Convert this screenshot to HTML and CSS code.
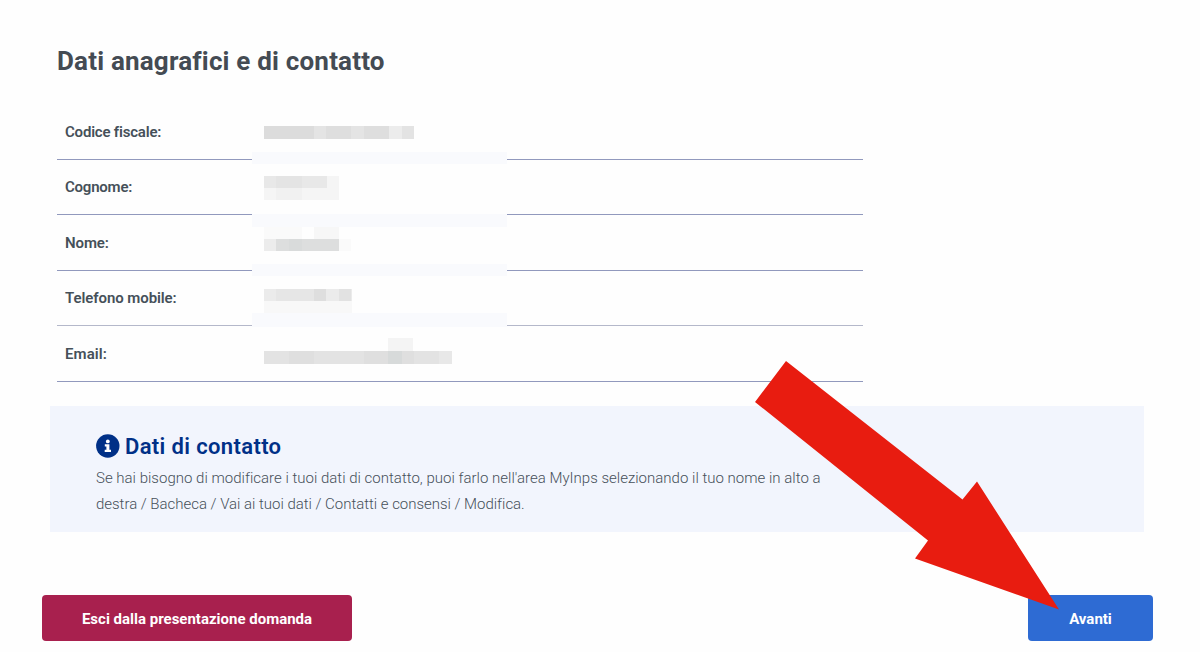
FILE: index.html
```html
<!DOCTYPE html>
<html lang="it">
<head>
<meta charset="utf-8">
<title>Dati anagrafici e di contatto</title>
<link rel="stylesheet" href="styles.css">
</head>
<body>
<main class="page">
  <h1 class="title">Dati anagrafici e di contatto</h1>

  <section class="details">
    <div class="row"><span class="label label-cf">Codice fiscale:</span></div>
    <div class="row row-short"><span class="label label-cognome">Cognome:</span></div>
    <div class="row"><span class="label label-nome">Nome:</span></div>
    <div class="row row-short row-soft"><span class="label label-tel">Telefono mobile:</span></div>
    <div class="row"><span class="label label-email">Email:</span></div>
    <!-- pixelated personal values -->
    <svg class="mosaic" width="255" height="278" viewBox="252 104 255 278" shape-rendering="crispEdges" aria-hidden="true">
      <g fill="#f9fafd">
        <path d="M252 152h255v12H252zM252 214h255v13H252zM252 264h255v12H252zM252 313h255v14H252z"/>
      </g>
      <path fill="#dcdcdc" d="M264 126h50v13h-50z"/>
      <path fill="#e4e4e4" d="M314 126h50v13h-50z"/>
      <path fill="#dedede" d="M326 126h25v13h-25zM364 126h25v13h-25z"/>
      <path fill="#ececec" d="M389 126h25v13h-25z"/>
      <path fill="#e3e3e3" d="M402 126h12v13h-12z"/>
      <path fill="#e8e8e8" d="M264 176h63v12h-63z"/>
      <path fill="#e4e4e4" d="M276 176h26v12h-26z"/>
      <path fill="#f5f5f5" d="M264 188h75v12h-75zM327 176h12v12h-12z"/>
      <path fill="#f1f1f1" d="M276 188h26v12h-26z"/>
      <path fill="#fafafa" d="M264 227h38v12h-38zM339 239h12v12h-12z"/>
      <path fill="#f7f7f7" d="M314 227h25v12h-25z"/>
      <path fill="#ececec" d="M264 239h12v12h-12z"/>
      <path fill="#dddede" d="M276 239h63v12h-63z"/>
      <path fill="#d9dbdb" d="M289 239h13v12h-13z"/>
      <path fill="#ebebeb" d="M264 289h88v12h-88z"/>
      <path fill="#e6e6e6" d="M276 289h38v12h-38z"/>
      <path fill="#dedede" d="M314 289h12v12h-12z"/>
      <path fill="#e2e2e2" d="M339 289h12v12h-12z"/>
      <path fill="#f8f8f8" d="M264 301h88v12h-88z"/>
      <path fill="#f4f4f4" d="M388 338h25v13h-25z"/>
      <path fill="#e3e3e3" d="M264 351h188v13H264z"/>
      <path fill="#dfdfdf" d="M289 351h25v13h-25zM364 351h24v13h-24zM402 351h12v13h-12z"/>
      <path fill="#d7dada" d="M388 351h14v13h-14z"/>
      <path fill="#e8e8e8" d="M439 351h13v13h-13z"/>
    </svg>
  </section>

  <section class="notice">
    <h2 class="notice-title">
      <svg class="info" width="24" height="24" viewBox="0 0 24 24" aria-hidden="true">
        <circle cx="11.800" cy="12" r="11.700" fill="#003087"/>
        <circle cx="11.800" cy="7.400" r="1.900" fill="#fff"/>
        <path fill="#fff" d="M8.800 10.300h4.600v5.500H15v2.100H8.700v-2.100h1.700v-3.400H8.800z"/>
      </svg>
      <span>Dati di contatto</span>
    </h2>
    <p class="notice-text"><span class="line-one">Se hai bisogno di modificare i tuoi dati di contatto, puoi farlo nell'area MyInps selezionando il tuo nome in alto a</span><br><span class="line-two">destra / Bacheca / Vai ai tuoi dati / Contatti e consensi / Modifica.</span></p>
  </section>

  <footer class="actions">
    <button class="btn btn-exit">Esci dalla presentazione domanda</button>
    <button class="btn btn-next">Avanti</button>
  </footer>

  <svg class="arrow" width="306" height="250" viewBox="754 360 306 250" aria-hidden="true">
    <path fill="#e81c10" d="M786 361 962.500 499.500 977 481.500 1059 609.500 915 558.500 928 540.500 755 402Z"/>
  </svg>
</main>
</body>
</html>
```
FILE: styles.css
```css
* { box-sizing: border-box; }
body {
  margin: 0;
  background: #fefefe;
  color: #455059;
  font-family: Roboto, "Noto Sans", sans-serif;
}
.page {
  position: relative;
  width: 1200px;
  height: 652px;
  padding: 41px 47px 0 42px;
  overflow: hidden;
}
.title {
  margin: 0 0 23px 15px;
  color: #444b53;
  font-size: 26px;
  font-weight: 700;
  letter-spacing: 0.19px;
  line-height: 40px;
  white-space: nowrap;
}
.details {
  position: relative;
  display: grid;
  grid-template-rows: 56px 55px 56px 55px 56px;
  width: 806px;
  margin-left: 15px;
}
.row {
  display: flex;
  align-items: center;
  padding: 1px 8px 0;
  border-bottom: 1px solid #9199bd;
}
.row-short { padding: 0 8px 1px; }
.row-soft { border-bottom-color: #b4b8ca; }
.label {
  font-size: 15px;
  font-weight: 600;
  line-height: 20px;
  white-space: nowrap;
}
.label-cf { letter-spacing: -0.2px; }
.label-cognome { letter-spacing: -0.22px; }
.label-nome { letter-spacing: -0.1px; }
.label-tel { letter-spacing: -0.08px; }
.label-email { letter-spacing: 0.1px; }
.mosaic {
  position: absolute;
  left: 195px;
  top: 0;
}
.notice {
  width: 1094px;
  height: 126px;
  margin: 24px 0 63px 8px;
  padding: 26px 46px 0;
  background: #f2f5fd;
}
.notice-title {
  display: flex;
  align-items: center;
  gap: 5px;
  height: 30px;
  margin: 0;
  color: #003087;
  font-size: 22px;
  font-weight: 600;
  letter-spacing: 0.36px;
  line-height: 30px;
  white-space: nowrap;
}
.info { flex: none; margin-top: -2px; }
.notice-text {
  margin: 3px 0 0;
  color: #46505a;
  font-size: 15px;
  font-weight: 300;
  line-height: 26px;
  white-space: nowrap;
}
.line-one { letter-spacing: 0.008px; }
.line-two { letter-spacing: -0.025px; }
.actions {
  display: flex;
  justify-content: space-between;
}
.btn {
  height: 46px;
  padding: 1px 0 0;
  border: 0;
  border-radius: 4px;
  color: #fff;
  font-family: inherit;
  font-size: 15px;
  font-weight: 700;
  white-space: nowrap;
}
.btn-exit { width: 310px; background: #a8204e; }
.btn-next { width: 125px; background: #2e6bd3; }
.arrow {
  position: absolute;
  left: 754px;
  top: 360px;
}
```
